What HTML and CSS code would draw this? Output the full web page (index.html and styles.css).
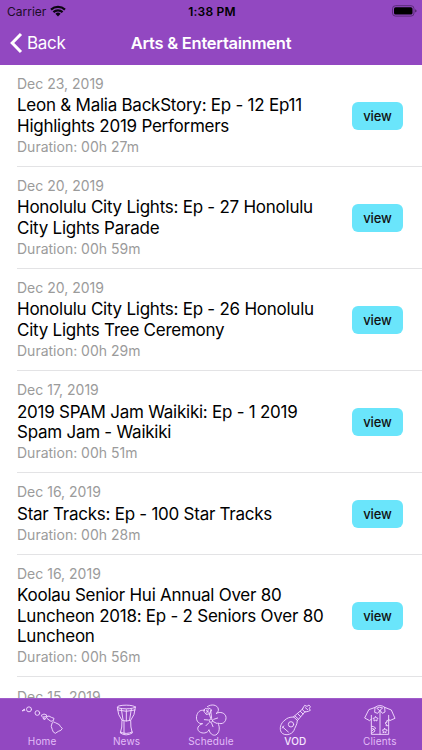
FILE: index.html
```
<!DOCTYPE html>
<html lang="en">
<head>
    <meta charset="UTF-8">
    <meta name="viewport" content="width=device-width, initial-scale=1.0">
    <title>Arts &amp; Entertainment</title>
    <link rel="stylesheet" href="styles.css">
</head>
<body>

    <header>
        <div class="status">
            <div class="carrier">
                Carrier
                <svg class="wifi" viewBox="0 0 16 12">
                    <path d="M1 4.6 A10.2 10.2 0 0 1 15 4.6" />
                    <path d="M3.4 7.1 A6.8 6.8 0 0 1 12.6 7.1" />
                    <path class="dot" d="M8 11.4 L5.4 8.8 A3.8 3.8 0 0 1 10.6 8.8 Z" />
                </svg>
            </div>
            <div class="time">1:38 PM</div>
            <svg class="battery" viewBox="0 0 25 12">
                <rect class="case" x="0.5" y="0.7" width="21.5" height="10.4" rx="3" />
                <rect x="2" y="2.2" width="18.5" height="7.4" rx="1.6" />
                <path d="M23.2 4.2 Q24.6 5 24.6 5.9 Q24.6 6.8 23.2 7.6 Z" opacity="0.5" />
            </svg>
        </div>
        <div class="nav">
            <div class="back">
                <svg viewBox="0 0 13 22"><path d="M11 2 L2.2 11 L11 20" /></svg>
                <span>Back</span>
            </div>
            <h1>Arts &amp; Entertainment</h1>
        </div>
    </header>

    <main>
        <div class="item">
            <div class="info">
                <p class="date">Dec 23, 2019</p>
                <h2>Leon &amp; Malia BackStory: Ep - 12 Ep11<br>Highlights 2019 Performers</h2>
                <p class="duration">Duration: 00h 27m</p>
            </div>
            <button>view</button>
        </div>
        <div class="item">
            <div class="info">
                <p class="date">Dec 20, 2019</p>
                <h2>Honolulu City Lights: Ep - 27 Honolulu<br>City Lights Parade</h2>
                <p class="duration">Duration: 00h 59m</p>
            </div>
            <button>view</button>
        </div>
        <div class="item">
            <div class="info">
                <p class="date">Dec 20, 2019</p>
                <h2>Honolulu City Lights: Ep - 26 Honolulu<br>City Lights Tree Ceremony</h2>
                <p class="duration">Duration: 00h 29m</p>
            </div>
            <button>view</button>
        </div>
        <div class="item">
            <div class="info">
                <p class="date">Dec 17, 2019</p>
                <h2>2019 SPAM Jam Waikiki: Ep - 1 2019<br>Spam Jam - Waikiki</h2>
                <p class="duration">Duration: 00h 51m</p>
            </div>
            <button>view</button>
        </div>
        <div class="item">
            <div class="info">
                <p class="date">Dec 16, 2019</p>
                <h2>Star Tracks: Ep - 100 Star Tracks</h2>
                <p class="duration">Duration: 00h 28m</p>
            </div>
            <button>view</button>
        </div>
        <div class="item">
            <div class="info">
                <p class="date">Dec 16, 2019</p>
                <h2>Koolau Senior Hui Annual Over 80<br>Luncheon 2018: Ep - 2 Seniors Over 80<br>Luncheon</h2>
                <p class="duration">Duration: 00h 56m</p>
            </div>
            <button>view</button>
        </div>
        <div class="item">
            <div class="info">
                <p class="date">Dec 15, 2019</p>
            </div>
        </div>
    </main>

    <footer>
        <div class="tab">
            <!-- islands -->
            <svg viewBox="60 69 132 102">
                <path d="M67 89 L73 84 L74 87 Z" />
                <circle cx="87" cy="85" r="7.5" />
                <circle cx="112" cy="96" r="7" />
                <path d="M124 103 L132 99 L140 102 L139 107 L129 108 Z M130 111 L137 112 L134 116 Z" />
                <path d="M140 107 L147 105 L154 109 L162 112 L160 119 L153 121 L147 117 L142 113 Z" />
                <path d="M157 125 Q160 120 166 125 L178 131 Q180 137 187 142 Q184 150 175 151 L166 157 Q158 154 157 146 L154 137 Z" />
            </svg>
            <span>Home</span>
        </div>
        <div class="tab">
            <!-- drum -->
            <svg viewBox="60 69 132 102">
                <ellipse cx="124" cy="78" rx="27" ry="5.5" />
                <path d="M97 79 Q98 103 111 118 Q124 122 137 118 Q150 103 151 79" />
                <path d="M98 87 Q124 95 150 87 M109 84 L114 116 M124 86 V120 M139 84 L134 116" />
                <path d="M111 119 Q112 139 106 156 Q123 167 142 156 Q136 139 137 119 M117 121 V159 M106 153 Q124 162 141 153" />
            </svg>
            <span>News</span>
        </div>
        <div class="tab">
            <!-- hibiscus -->
            <svg viewBox="57 69 132 102">
                <path d="M112 77 C124 68 142 71 145 84 C146 91 142 95 138 98 C150 90 167 96 168 109 C169 123 157 132 143 126 C151 137 149 157 137 162 C127 165 119 156 117 146 C113 157 97 159 88 152 C78 143 85 132 98 128 C83 130 76 115 81 101 C85 90 94 85 104 89" />
                <path d="M103 85 Q106 79 111 84 Q117 78 121 84 L126 88 L121 92 Q122 101 114 99 Q108 104 106 96 Q98 93 103 85 Z M109 89 L117 94 M115 86 L110 96 M118 99 L122 112 M122 88 L125 112" />
                <circle cx="123" cy="119" r="5" />
                <path d="M131 115 L143 111 M130 122 L140 127 M125 127 L129 137 M117 125 L108 134 M115 117 L103 116" />
            </svg>
            <span>Schedule</span>
        </div>
        <div class="tab active">
            <!-- ukulele -->
            <svg viewBox="63 69 132 102">
                <path d="M124 108 C113 108 105 111 99 117 C86 126 81 143 88 154 C97 166 119 162 126 148 C128 140 136 131 136 119 Z" />
                <circle cx="117" cy="130" r="8" />
                <path d="M92 138 L109 153 M95 135 L91 141 M124 108 L153 83 M136 119 L160 91 M129 105 L139 114 M137 98 L146 107 M145 91 L153 99" />
                <path d="M151 84 L158 73 L165 76 L171 72 L175 77 L172 83 L175 88 L169 91 L160 93 Z M160 80 L167 86" />
            </svg>
            <span>VOD</span>
        </div>
        <div class="tab">
            <!-- aloha shirt -->
            <svg viewBox="63 69 132 102">
                <path d="M114 79 Q129 68 143 79 L163 87 L174 112 L158 119 L155 114 V160 H103 V114 L98 119 L83 111 L95 87 Z" />
                <path d="M114 79 L113 94 L122 97 L129 88 L136 97 L144 93 L143 79 M120 81 Q128 76 137 81 L129 88 Z M129 88 V160 M103 114 V103 M155 114 V103" />
                <path d="M116 107 L119 111 L123 112 L120 116 L120 120 L116 118 L111 120 L111 115 L108 112 L113 111 Z" />
                <path d="M143 142 L146 146 L151 147 L147 151 L147 155 L143 153 L138 155 L139 150 L136 147 L141 146 Z" />
                <path d="M154 117 L148 120 L151 123 L144 126 L148 129 L147 134 L154 134 M104 136 L110 137 L116 141 L112 146 L114 150 L104 157 M105 143 L111 144 L105 150" />
            </svg>
            <span>Clients</span>
        </div>
    </footer>

</body>
</html>
```

FILE: styles.css
```
* {
    box-sizing: border-box;
}

body {
    margin: 0;
    height: 750px;
    display: flex;
    flex-direction: column;
    overflow: hidden;
    background-color: #fff;
    font-family: 'Inter', sans-serif;
}

header {
    height: 65px;
    flex-shrink: 0;
    background-color: #9248c1;
}

.status {
    display: grid;
    grid-template-columns: 1fr auto 1fr;
    align-items: center;
    height: 22px;
    padding: 0 5px 0 7px;
    font-size: 12px;
}

.carrier {
    display: flex;
    align-items: center;
    gap: 4px;
    color: #1c0d27;
}

.wifi {
    width: 16px;
    height: 12px;
    fill: none;
    stroke: #0c0512;
    stroke-width: 2.2;
}

.wifi .dot {
    fill: #0c0512;
    stroke: none;
}

.time {
    font-weight: 600;
    letter-spacing: 0.2px;
}

.battery {
    width: 25px;
    height: 12px;
    justify-self: end;
}

.battery .case {
    fill: none;
    stroke: #5b2d79;
}

.nav {
    display: grid;
    grid-template-columns: 1fr auto 1fr;
    align-items: center;
    height: 42px;
    padding: 0 10px;
    color: #fff;
}

.back {
    display: flex;
    align-items: center;
    gap: 4px;
    font-size: 17px;
    letter-spacing: -0.3px;
}

.back svg {
    width: 13px;
    height: 22px;
    fill: none;
    stroke: #fff;
    stroke-width: 3;
}

h1 {
    margin: 0;
    font-size: 16.5px;
    font-weight: 600;
    letter-spacing: -0.25px;
}

main {
    flex: 1;
    min-height: 0;
    overflow: hidden;
}

.item {
    display: flex;
    align-items: center;
    justify-content: space-between;
    margin-left: 17px;
    padding: 9.1px 19px 9px 0;
    border-bottom: 1px solid #e3e3e5;
}

.date, .duration {
    margin: 0;
    font-size: 14px;
    line-height: 20px;
    color: #9b9b9b;
}

h2 {
    margin: 1.2px 0 0.8px;
    font-size: 17px;
    line-height: 20.5px;
    font-weight: 400;
    letter-spacing: -0.25px;
    color: #000;
    white-space: nowrap;
}

button {
    width: 51px;
    height: 28px;
    padding: 0;
    border: none;
    border-radius: 6px;
    background-color: #6ae5fb;
    color: #111;
    font-family: inherit;
    font-size: 13px;
    font-weight: 500;
    letter-spacing: -0.1px;
}

footer {
    display: flex;
    flex-shrink: 0;
    height: 52px;
    padding-top: 5px;
    background-color: #9248c1;
    border-top: 1px solid #a05cca;
}

.tab {
    flex: 1;
    display: flex;
    flex-direction: column;
    align-items: center;
    font-size: 10px;
    line-height: 12px;
    letter-spacing: 0.2px;
    color: #e2bdf8;
}

.tab svg {
    width: 44px;
    height: 34px;
    margin-bottom: -3px;
    fill: none;
    stroke: #f3dcff;
    stroke-width: 2.8;
    stroke-linejoin: round;
    stroke-linecap: round;
}

.active {
    color: #f7e6ff;
    font-weight: 500;
}
```
